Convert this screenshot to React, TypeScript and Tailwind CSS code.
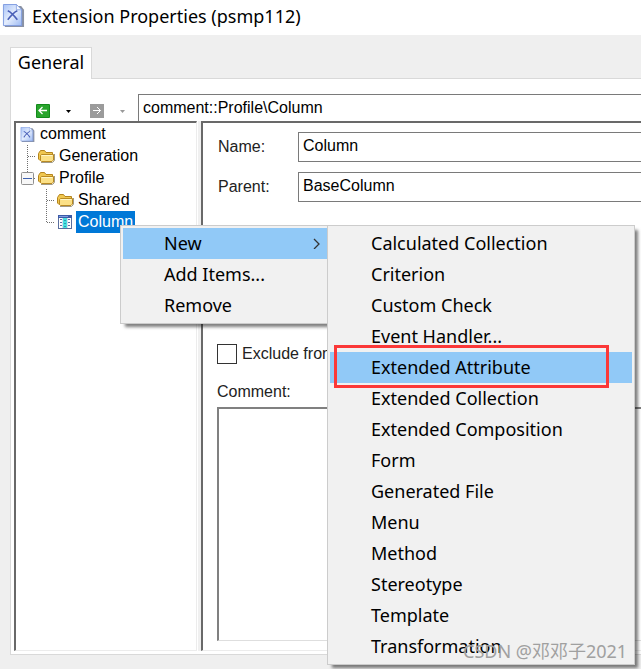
import type { ReactNode } from "react";

const UI = 'font-["Noto_Sans","Open_Sans",sans-serif]';
const ARIAL = 'font-["Liberation_Sans",Arial,sans-serif]';

const submenu = [
  "Calculated Collection",
  "Criterion",
  "Custom Check",
  "Event Handler...",
  "Extended Attribute",
  "Extended Collection",
  "Extended Composition",
  "Form",
  "Generated File",
  "Menu",
  "Method",
  "Stereotype",
  "Template",
  "Transformation",
];

function DocIcon({ size }: { size: number }) {
  return (
    <svg width={size} height={size} viewBox="0 0 24 24" className="shrink-0" aria-hidden="true">
      <defs>
        <linearGradient id="page" x1="0" y1="0" x2="1" y2="1">
          <stop offset="0" stopColor="#a9c3f6" />
          <stop offset="0.5" stopColor="#e4edfd" />
          <stop offset="1" stopColor="#9dbaf3" />
        </linearGradient>
      </defs>
      <path d="M3 2H20L23 6V24H3z" fill="#8a92a3" />
      <path d="M1.500 .5H15L20.500 6V22.500H1.500z" fill="url(#page)" stroke="#7f9ce0" />
      <path d="M15 .5V6H20.500z" fill="#f4f8ff" stroke="#7f9ce0" strokeWidth=".8" />
      <path d="M6 7C8.500 8 13 12.500 16 16.500M16 7C13.500 8 9 12.500 6 16.500" fill="none" stroke="#4a60b8" strokeWidth="1.700" />
    </svg>
  );
}

function FolderIcon() {
  return (
    <svg width="17" height="16" viewBox="0 0 17 16" className="shrink-0" aria-hidden="true">
      <path d="M3 14.500H14.500L16.500 12.500V6" fill="none" stroke="#a09a88" />
      <path d="M.5 5.500L2.500 2.500H6.500L8 4.500H14.500V12.500H2L.5 11z" fill="#f0c750" stroke="#b5851e" />
      <path d="M2.500 7.500L3.500 6.500H15.500V12L14 13.500H3.500L2.500 12.500z" fill="#fbe086" stroke="#b98a22" />
      <path d="M3.500 7.500H14.500" stroke="#fff6c8" />
    </svg>
  );
}

function ColumnIcon() {
  return (
    <svg width="14" height="14" viewBox="0 0 14 14" className="shrink-0" shapeRendering="crispEdges" aria-hidden="true">
      <rect width="14" height="14" fill="#5a6f9e" />
      <rect x="1" y="3" width="12" height="10" fill="#fff" />
      <rect width="14" height="3" fill="#3c5aa6" />
      <rect x="1" y="1" width="9" height="1" fill="#7e9be0" />
      <rect x="5" y="3" width="4" height="10" fill="#48e0e0" />
      <path d="M4 3h1v10h-1zM9 3h1v10h-1z" fill="#d5dcec" />
      <path d="M2 4h2v1h-2zM2 7h2v1h-2zM2 10h2v1h-2zM10 4h2v1h-2zM10 7h2v1h-2zM10 10h2v1h-2z" fill="#5b6ca8" />
      <path d="M6 5h2v1h-2zM6 8h2v1h-2zM6 11h2v1h-2z" fill="#2a9db4" />
    </svg>
  );
}

function Branch({ d, box }: { d: string; box?: boolean }) {
  return (
    <svg width="20" height="22" viewBox="0 0 20 22" className="shrink-0" aria-hidden="true">
      <path d={d} fill="none" stroke="#707070" strokeDasharray="1 1" />
      {box && (
        <g>
          <rect x="5.500" y="5.500" width="12" height="12" rx="1" fill="#f7f7f7" stroke="#919191" />
          <path d="M7 11.500H16" stroke="#3f62b0" />
        </g>
      )}
    </svg>
  );
}

function TreeRow({ children }: { children: ReactNode }) {
  return <li className="flex h-[22px] items-center whitespace-nowrap">{children}</li>;
}

function Field({ id, label, value }: { id: string; label: string; value: string }) {
  return (
    <div className="flex h-[30px] items-center">
      <label htmlFor={id} className="w-20 shrink-0 text-[#222]">
        {label}
      </label>
      <input
        id={id}
        defaultValue={value}
        className="h-full min-w-0 flex-1 border border-r-0 border-[#7a7a7a] bg-white px-1 pb-[2px] text-black outline-none"
      />
    </div>
  );
}

export default function App() {
  return (
    <div className={`relative flex h-screen flex-col overflow-hidden bg-[#efefef] text-black ${UI}`}>
      <header className="flex h-[35px] shrink-0 items-center gap-[7px] bg-white pb-1 pl-[2px]">
        <DocIcon size={23} />
        <h1 className="text-[18px] leading-6 whitespace-nowrap">Extension Properties (psmp112)</h1>
      </header>

      <div className="flex min-h-0 flex-1 flex-col pt-3 pb-[14px] pl-[10px]">
        <div role="tablist" className="flex shrink-0">
          <button role="tab" aria-selected="true" className="z-10 -mb-px h-8 w-[82px] border border-b-0 border-[#d9d9d9] bg-white pb-1 text-[18px] leading-6">
            General
          </button>
        </div>

        <main className={`flex min-h-0 flex-1 flex-col border border-r-0 border-[#d9d9d9] bg-white pb-[3px] pl-[3px] text-[16px] leading-5 ${ARIAL}`}>
          <div className="flex h-[42px] shrink-0 items-end">
            <div className="flex w-[124px] shrink-0 items-center pb-[3px] pl-[22px]">
              <button aria-label="Back">
                <svg width="14" height="14" viewBox="0 0 14 14">
                  <rect width="14" height="14" rx="1" fill="#138a1c" />
                  <rect x="1" y="1" width="12" height="12" fill="#28a52c" />
                  <path d="M11 6.500H3.500M6.500 3L3 6.500L6.500 10" fill="none" stroke="#fff" strokeWidth="1.300" />
                </svg>
              </button>
              <button aria-label="Back history" className="ml-4">
                <svg width="5" height="3" viewBox="0 0 5 3"><path d="M0 0H5L2.500 3z" fill="#000" /></svg>
              </button>
              <button aria-label="Forward" className="ml-[19px]">
                <svg width="14" height="14" viewBox="0 0 14 14">
                  <rect width="14" height="14" fill="#9b9b9b" />
                  <path d="M3 6.500H10.500M7 3L10.500 6.500L7 10" fill="none" stroke="#fff" />
                </svg>
              </button>
              <button aria-label="Forward history" className="ml-4">
                <svg width="5" height="3" viewBox="0 0 5 3"><path d="M0 0H5L2.500 3z" fill="#999" /></svg>
              </button>
            </div>
            <input
              aria-label="Path"
              defaultValue="comment::Profile\Column"
              className="h-[27px] min-w-0 flex-1 border border-r-0 border-b-0 border-[#7a7a7a] bg-white px-1 outline-none"
            />
          </div>

          <div className="flex min-h-0 flex-1">
            <nav className="w-[183px] shrink-0 border-t-2 border-r border-b border-l-2 border-t-[#696969] border-r-[#ececec] border-b-[#ececec] border-l-[#696969]">
              <ul>
                <TreeRow>
                  <span className="flex items-center gap-[5px] pl-1">
                    <DocIcon size={15} />
                    comment
                  </span>
                </TreeRow>
                <TreeRow>
                  <Branch d="M11.500 0V22M12 11.500H20" />
                  <span className="flex items-center gap-1 pl-[2px]">
                    <FolderIcon />
                    Generation
                  </span>
                </TreeRow>
                <TreeRow>
                  <Branch d="M11.500 0V6M18 11.500H20" box />
                  <span className="flex items-center gap-1 pl-[2px]">
                    <FolderIcon />
                    Profile
                  </span>
                </TreeRow>
                <TreeRow>
                  <span className="flex items-center pl-[19px]">
                    <Branch d="M11.500 0V22M12 11.500H20" />
                    <span className="flex items-center gap-1 pl-[2px]">
                      <FolderIcon />
                      Shared
                    </span>
                  </span>
                </TreeRow>
                <TreeRow>
                  <span className="flex items-center pl-[19px]">
                    <Branch d="M11.500 0V11.500H20" />
                    <span className="flex items-center gap-1 pl-[3px]">
                      <ColumnIcon />
                      <span className="h-[22px] bg-[#0078d7] px-[2px] leading-[22px] text-white">Column</span>
                    </span>
                  </span>
                </TreeRow>
              </ul>
            </nav>
            <div className="ml-px w-[3px] shrink-0 bg-[#f0f0f0]" />
            <form className="flex min-w-0 flex-1 flex-col border-t-2 border-b border-l-2 border-t-[#696969] border-b-[#ececec] border-l-[#696969] pt-[9px] pb-[9px] pl-[14px]">
              <div className="flex flex-col gap-[10px] pl-px">
                <Field id="name" label="Name:" value="Column" />
                <Field id="parent" label="Parent:" value="BaseColumn" />
              </div>
              <div className="mt-[142px] flex h-5 shrink-0 items-center gap-[5px]">
                <input id="exclude" type="checkbox" className="size-5 shrink-0 appearance-none border border-[#333] bg-white" />
                <label htmlFor="exclude" className="whitespace-nowrap text-[#222]">
                  Exclude from
                </label>
              </div>
              <label htmlFor="comment" className="mt-[18px] shrink-0 text-[#222]">
                Comment:
              </label>
              <textarea
                id="comment"
                className="mt-[5px] min-h-0 flex-1 resize-none border-t-2 border-b border-l-2 border-t-[#808080] border-b-[#dedede] border-l-[#808080] bg-white outline-none"
              />
            </form>
          </div>
        </main>
      </div>

      <div role="menu" className="absolute top-[225px] left-[120px] flex w-[211px] flex-col border border-[#ccc] bg-[#f1f1f1] p-[2px] text-[18px] leading-6 shadow-[4px_4px_3px_-1px_rgba(0,0,0,0.5)]">
        <button role="menuitem" className="flex h-[31px] items-center justify-between bg-[#91c9f7] pr-[7px] pb-[2px] pl-[41px]">
          New
          <svg width="8" height="12" viewBox="0 0 8 12" aria-hidden="true">
            <path d="M1 2L6 7L1 12" fill="none" stroke="#333" strokeWidth="1.300" />
          </svg>
        </button>
        <button role="menuitem" className="flex h-[31px] items-center pb-[2px] pl-[41px]">Add Items...</button>
        <button role="menuitem" className="flex h-[31px] items-center pb-[2px] pl-[41px]">Remove</button>
      </div>

      <div role="menu" className="absolute top-[225px] left-[327px] flex w-[308px] flex-col border border-[#ccc] bg-[#f1f1f1] p-[2px] text-[18px] leading-6 shadow-[4px_4px_3px_-1px_rgba(0,0,0,0.5)]">
        {submenu.map((item) => (
          <button
            key={item}
            role="menuitem"
            className={`flex h-[31px] shrink-0 items-center pb-[2px] pl-[41px] whitespace-nowrap ${item === "Extended Attribute" ? "bg-[#91c9f7]" : ""}`}
          >
            {item}
          </button>
        ))}
      </div>

      <div className="pointer-events-none absolute top-[345px] left-[334px] h-[43px] w-[275px] border-3 border-[#fb3838]" />
      <p className='pointer-events-none absolute top-[639px] left-[463px] font-["Noto_Sans","Noto_Sans_CJK_SC",sans-serif] text-[18px] leading-6 whitespace-nowrap text-[#a0a0a0]'>
        CSDN @邓邓子2021
      </p>
    </div>
  );
}
